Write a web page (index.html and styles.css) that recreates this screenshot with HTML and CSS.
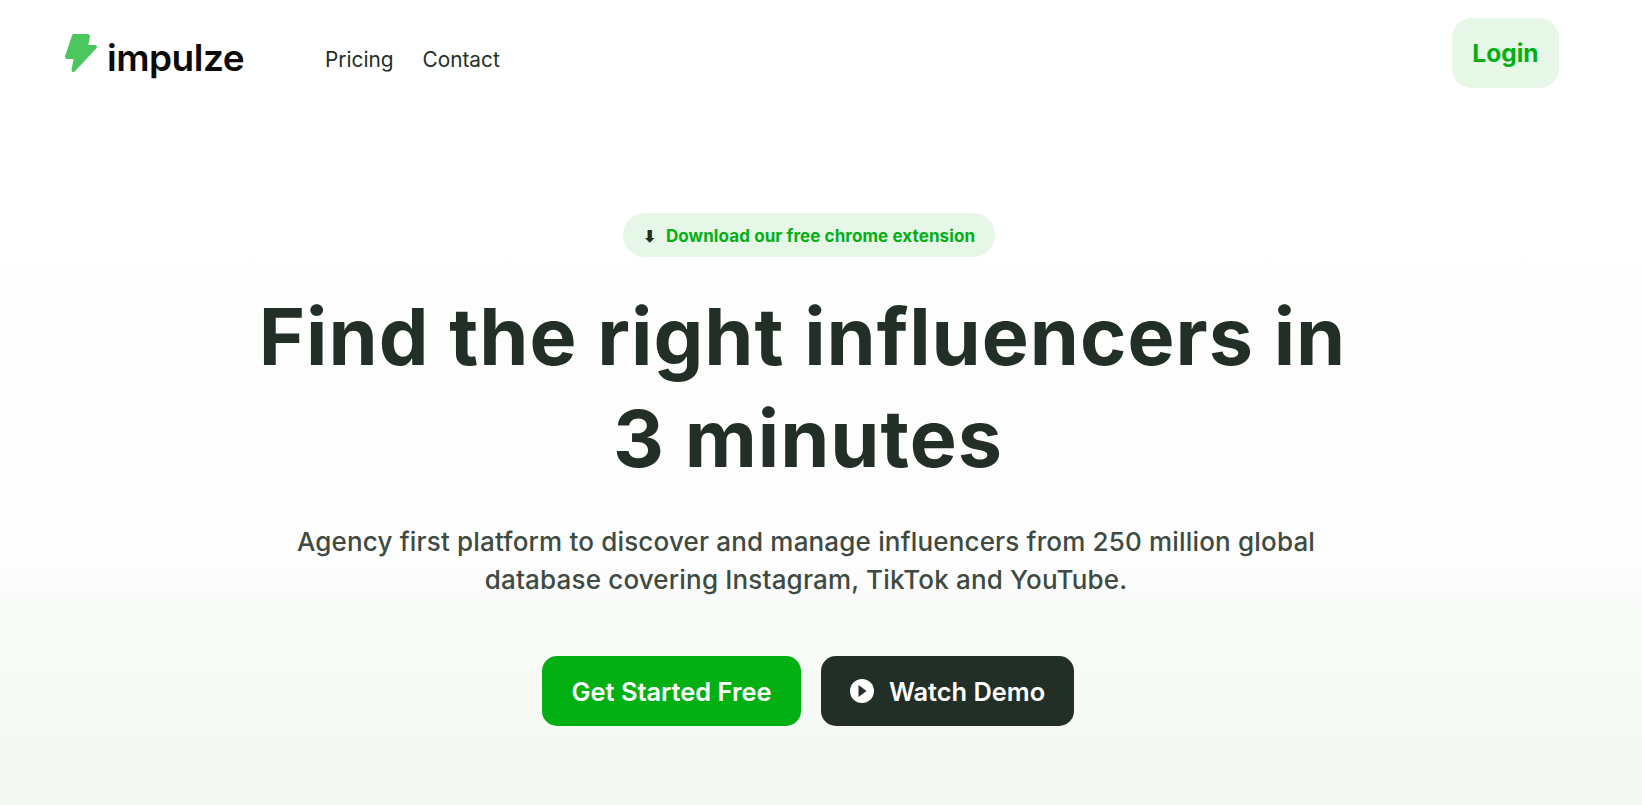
FILE: index.html
```html
<!DOCTYPE html>
<html lang="en">
<head>
  <meta charset="UTF-8" />
  <meta name="viewport" content="width=device-width, initial-scale=1.0"/>
  <title>impulze</title>
  <link rel="stylesheet" href="styles.css">
</head>
<body>
  <header class="navbar">
    <a class="logo" href="#">
      <svg class="logo-icon" viewBox="0 0 34 40" aria-hidden="true">
        <path d="M10 3 L24 3 L22 14 L31 14 L9.500 37 L12 24 L3 24 Z" fill="#4cc75f" stroke="#4cc75f" stroke-width="4" stroke-linejoin="round"/>
      </svg>
      <span class="logo-text">impulze</span>
    </a>
    <nav class="nav-links">
      <a href="#">Pricing</a>
      <a href="#">Contact</a>
    </nav>
    <a class="btn-login" href="#">Login</a>
  </header>
  <main class="hero">
    <a class="pill" href="#"><span class="pill-arrow">⬇</span>Download our free chrome extension</a>
    <h1 class="title"><span class="title-first">Find the right influencers in</span>3 minutes</h1>
    <p class="subtitle">Agency first platform to discover and manage influencers from 250 million global database covering Instagram, TikTok and YouTube.</p>
    <div class="button-area">
      <a class="btn btn-green" href="#">Get Started Free</a>
      <a class="btn btn-dark" href="#">
        <svg class="play-icon" viewBox="0 0 24 24" aria-hidden="true">
          <circle cx="12" cy="12" r="12" fill="#fff"/>
          <path d="M8.500 6 L16.500 12 L8.500 18 Z" fill="#222f26"/>
        </svg>
        Watch Demo
      </a>
    </div>
  </main>
</body>
</html>
```

FILE: styles.css
```css
body {
  margin: 0;
  height: 805px;
  overflow: hidden;
  font-family: 'Inter', 'Liberation Sans', sans-serif;
  background: linear-gradient(to bottom, #ffffff 0%, #ffffff 30%, #fdfdfd 42%, #fdfdfd 70%, #f9fbf9 75%, #f3f8f2 100%);
  color: #222f26;
}
a {
  text-decoration: none;
  color: inherit;
}
.navbar {
  display: flex;
  align-items: center;
  height: 70px;
  padding: 18px 83px 0 64px;
}
.logo {
  display: flex;
  align-items: center;
  gap: 9px;
  color: #0b0b0b;
}
.logo-icon {
  width: 34px;
  height: 40px;
}
.logo-text {
  margin-top: 8px;
  font-size: 37px;
  font-weight: 600;
  letter-spacing: -0.5px;
}
.nav-links {
  display: flex;
  gap: 29px;
  margin: 12px 0 0 81px;
  font-size: 20.8px;
  color: #222f26;
}
.btn-login {
  margin-left: auto;
  display: flex;
  align-items: center;
  justify-content: center;
  width: 107px;
  height: 70px;
  border-radius: 20px;
  background: #e6f6e7;
  color: #02b014;
  font-size: 24.5px;
  font-weight: 700;
}
.hero {
  display: flex;
  flex-direction: column;
  align-items: center;
  margin-top: 125px;
  padding-right: 26px;
}
.pill {
  display: flex;
  align-items: center;
  height: 43px;
  margin-left: 2px;
  padding: 1px 20px 0;
  border-radius: 22px;
  background: #e6f6e7;
  color: #02b014;
  font-size: 17px;
  font-weight: 650;
  letter-spacing: 0.1px;
}
.pill-arrow {
  margin-right: 10px;
  color: #222f26;
  font-size: 16px;
}
.title {
  margin: 28px 0 0;
  font-size: 79px;
  font-weight: 650;
  line-height: 102px;
  letter-spacing: 1px;
  text-align: center;
  color: #222f26;
}
.title-first {
  display: block;
  padding-right: 11px;
}
.subtitle {
  width: 1060px;
  margin: 34px 4px 0 0;
  font-size: 26px;
  font-weight: 550;
  line-height: 38px;
  letter-spacing: 0.17px;
  text-align: center;
  color: #3e4a42;
}
.button-area {
  display: flex;
  gap: 20px;
  margin-top: 57px;
}
.btn {
  display: flex;
  align-items: center;
  justify-content: center;
  height: 70px;
  border-radius: 15px;
  color: #fff;
  font-size: 25.4px;
  font-weight: 600;
}
.btn-green {
  width: 259px;
  background: #02b014;
}
.btn-dark {
  width: 253px;
  gap: 15px;
  background: #222f26;
}
.play-icon {
  width: 24px;
  height: 24px;
}
```
